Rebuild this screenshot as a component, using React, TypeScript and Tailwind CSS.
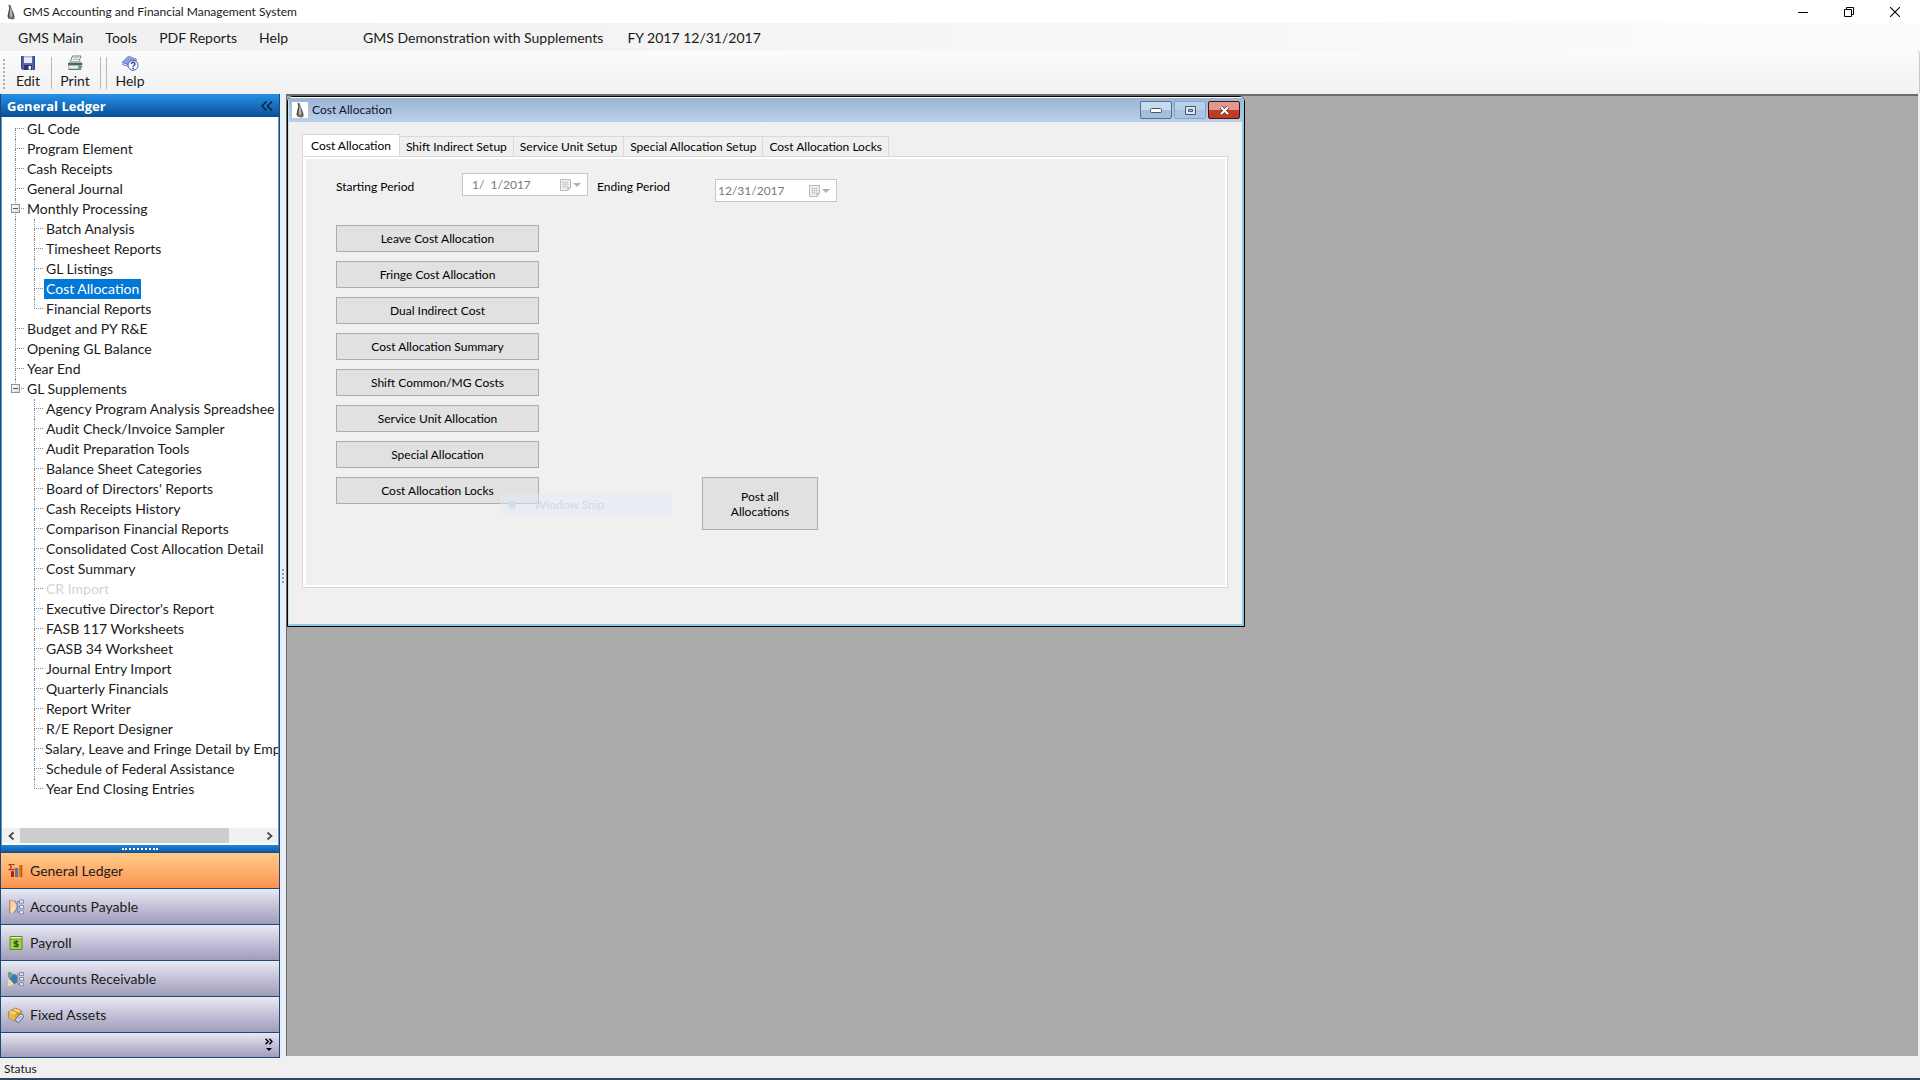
import React, { useState } from 'react';
import clsx from 'clsx';

type TreeNode = {
  label: string;
  disabled?: boolean;
  children?: TreeNode[];
};

const treeNodes: TreeNode[] = [
  { label: 'GL Code' },
  { label: 'Program Element' },
  { label: 'Cash Receipts' },
  { label: 'General Journal' },
  {
    label: 'Monthly Processing',
    children: [
      { label: 'Batch Analysis' },
      { label: 'Timesheet Reports' },
      { label: 'GL Listings' },
      { label: 'Cost Allocation' },
      { label: 'Financial Reports' },
    ],
  },
  { label: 'Budget and PY R&E' },
  { label: 'Opening GL Balance' },
  { label: 'Year End' },
  {
    label: 'GL Supplements',
    children: [
      { label: 'Agency Program Analysis Spreadshee' },
      { label: 'Audit Check/Invoice Sampler' },
      { label: 'Audit Preparation Tools' },
      { label: 'Balance Sheet Categories' },
      { label: "Board of Directors' Reports" },
      { label: 'Cash Receipts History' },
      { label: 'Comparison Financial Reports' },
      { label: 'Consolidated Cost Allocation Detail' },
      { label: 'Cost Summary' },
      { label: 'CR Import', disabled: true },
      { label: "Executive Director's Report" },
      { label: 'FASB 117 Worksheets' },
      { label: 'GASB 34 Worksheet' },
      { label: 'Journal Entry Import' },
      { label: 'Quarterly Financials' },
      { label: 'Report Writer' },
      { label: 'R/E Report Designer' },
      { label: 'Salary, Leave and Fringe Detail by Emp' },
      { label: 'Schedule of Federal Assistance' },
      { label: 'Year End Closing Entries' },
    ],
  },
];

const tabs = [
  'Cost Allocation',
  'Shift Indirect Setup',
  'Service Unit Setup',
  'Special Allocation Setup',
  'Cost Allocation Locks',
];

const allocationActions = [
  'Leave Cost Allocation',
  'Fringe Cost Allocation',
  'Dual Indirect Cost',
  'Cost Allocation Summary',
  'Shift Common/MG Costs',
  'Service Unit Allocation',
  'Special Allocation',
  'Cost Allocation Locks',
];

/* Icons */

const AppIcon = () => (
  <svg width="16" height="16" viewBox="0 0 16 16" aria-hidden="true">
    <path d="M5.5.5 8 1.2l.8 4 2.2 4.300.8 4-1.200.8H5.200L4.600 12l1-4.500.6-3.200z" fill="#96918b" />
    <path d="M5.500.5 7.500 3l-.2 4L6.200 11l.4 3.500-1.400-.2-.6-2.300 1-4.500.7-3.200z" fill="#4d4845" />
    <path d="M8.200 3.500 9.900 8l1.300 5-1.600 1.200.2-3.400z" fill="#4a4542" />
    <path d="M7.700 5.500 8.200 12" stroke="#dcd8d2" />
    <path d="M5 14.500 8 13.400l4.300 1.100-3 1z" fill="#6a655f" />
  </svg>
);

const SaveIcon = () => (
  <svg width="16" height="16" viewBox="0 0 16 16" aria-hidden="true">
    <path d="M1 1h14v14H2.5L1 13.5z" fill="#5668b4" />
    <path d="M1 1h1.5v12.5H1zM13.5 1H15v14h-1.5z" fill="#36458c" />
    <path d="M4 1h8v7H4z" fill="#e9eefb" />
    <path d="M4 1h8v1.5H4z" fill="#a9b6e2" />
    <path d="M4 10h8v5H4z" fill="#2b3468" />
    <path d="M8.5 11H11v3.5H8.5z" fill="#f4f6fd" />
  </svg>
);

const PrinterIcon = () => (
  <svg width="16" height="16" viewBox="0 0 16 16" aria-hidden="true">
    <path d="M5.5 1H14l-2.5 6.5H3z" fill="#fff" stroke="#5f6a6a" strokeWidth=".9" />
    <path d="M6.4 2.8h5.4M5.7 4.6h5.4" stroke="#8a9999" strokeWidth=".8" />
    <path d="m1 8 2.2-2h10.2L15.2 8v5l-1.6 1.8H2.2L1 13.5z" fill="#aab4b4" />
    <path d="M1 8h14.2v2H1z" fill="#55605f" />
    <path d="M2 11h9v3H2z" fill="#e6ecea" />
    <path d="M11.4 10.6h3v2.6h-3z" fill="#38b24a" />
    <path d="M1.5 14.3h12.4" stroke="#4c5757" />
  </svg>
);

const HelpBookIcon = () => (
  <svg width="18" height="16" viewBox="0 0 18 16" aria-hidden="true">
    <path d="M1 7 7.5.8 15.6 4v3L9 12.6 1.4 10z" fill="#6575c4" />
    <path d="M1 7 7.5.8 15.6 4 9 9.8z" fill="#8f9cdb" />
    <path d="m1.2 8.4 7.6 2.9 6.5-5.4" stroke="#e6eaf8" fill="none" />
    <circle cx="12" cy="10.3" r="5" fill="#f7faff" stroke="#4b5fae" />
    <path d="M10.3 9a1.8 1.7 0 1 1 2.6 1.5c-.7.4-.8.7-.8 1.3" stroke="#2d479f" strokeWidth="1.4" fill="none" />
    <circle cx="12.1" cy="13.3" r=".9" fill="#2d479f" />
  </svg>
);

const LedgerIcon = () => (
  <svg width="16" height="16" viewBox="0 0 16 16" aria-hidden="true">
    <path d="M6 2.2v-.7H1.2L3.6 4 1.2 6.6H6v-.9" stroke="#b3341c" strokeWidth="1.1" fill="none" />
    <path d="M3 8.2h3V14H3z" fill="#b01f14" />
    <path d="M7 5h3.2v9H7z" fill="#6c6c9c" />
    <path d="M11.2 2h3v12h-3z" fill="#d9731a" />
    <path d="M13.2 2h1v12h-1z" fill="#b35a10" />
  </svg>
);

const PayableIcon = () => (
  <svg width="16" height="16" viewBox="0 0 16 16" aria-hidden="true">
    <path d="M1.5 1v13.5" stroke="#d7705f" />
    <path d="M2 1.5h2.6c3 1 4.3 3.6 4.3 6.2L5 13.6l-3 .9z" fill="#f5cdb2" stroke="#d88b70" strokeWidth=".7" />
    <path d="M3 8.5 9 7l-3.6 6.5-2.4.8z" fill="#f7dfa6" />
    <path d="m6 1.5 3.6 4-1.4 6L5.6 14" stroke="#7191c6" strokeWidth="1.1" fill="none" />
    <path d="M9 2.5h2.5M9 8h2.5M9 13.2h2.5M9.6 2.5v10.7" stroke="#7a8fb4" fill="none" />
    <path d="M11.5 1h4v3h-4zM11.5 6.4h4v3h-4zM11.5 11.8h4v3h-4z" fill="#edf2fb" stroke="#7a8fb4" />
  </svg>
);

const PayrollIcon = () => (
  <svg width="16" height="16" viewBox="0 0 16 16" aria-hidden="true">
    <path d="M2 1.5h12v13H2z" fill="#a8cf4e" stroke="#5d8c1f" />
    <path d="M2.5 2h11v1.6h-11z" fill="#e4f2c2" />
    <path d="M2 4.2h12" stroke="#5d8c1f" strokeWidth=".8" />
    <path
      d="M10.4 7C9.6 6.2 6 6 6 7.7c0 1.8 4.4.8 4.4 2.5 0 1.7-3.8 1.5-4.7.5M8.2 5.300v7.200"
      stroke="#22610f"
      strokeWidth="1.3"
      fill="none"
    />
  </svg>
);

const ReceivableIcon = () => (
  <svg width="16" height="16" viewBox="0 0 16 16" aria-hidden="true">
    <path d="M0 1h2.5L6 4 2 8.5 0 6z" fill="#6ba48c" />
    <path d="m0 8.5 3.6 1L6 13l-3 2H0z" fill="#efd9a2" />
    <path d="M6.2 2.8 9 4.5v7l-2.800 1.800L1.600 8z" fill="#3f78b4" />
    <path d="M9 3h3M9 8h3M9 13.2h3M9.7 3v10" stroke="#8b9199" fill="none" />
    <path d="M11.5 1.5h4v3h-4zM11.5 6.5h4v3h-4zM11.5 11.7h4v3h-4z" fill="#dfe2ec" stroke="#868c95" />
  </svg>
);

const AssetsIcon = () => (
  <svg width="16" height="16" viewBox="0 0 16 16" aria-hidden="true">
    <path d="M.5 4.8 7.5 1l5.800 2.600v6L6.200 14 .5 10.600z" fill="#e2a63b" stroke="#9a6a1c" strokeWidth=".7" />
    <path d="M.9 4.9 7.5 1.400l5.400 2.300-6.600 3.700z" fill="#f8d788" />
    <path d="M6.3 7.4v6.3L.9 10.5V5z" fill="#eeb850" />
    <path d="m4 3.3 5.6 2.4v2" stroke="#b98428" fill="none" />
    <rect x="9.3" y="6.5" width="4.5" height="9" rx="2.2" transform="rotate(42 11.5 11)" fill="#e3e8f4" stroke="#5b6c96" />
    <path d="m9.8 12.800 3.400-3.600" stroke="#5b6c96" />
  </svg>
);

const CalendarIcon = () => (
  <svg width="22" height="14" viewBox="0 0 22 14" aria-hidden="true">
    <path d="M1.5 1.5h10v8l-2.500 3H1.500z" fill="#f2f2f2" stroke="#b9b9b9" />
    <path d="M3 4.5h7M3 6.5h7M3 8.5h6M4.500 3v8M6.500 3v8M8.500 3v8" stroke="#d3d3d3" />
    <path d="M9 12.5v-3h2.500" stroke="#b9b9b9" fill="none" />
    <path d="M14 5h8l-4 4z" fill="#b0b0b0" />
  </svg>
);

const navItems = [
  { label: 'General Ledger', icon: <LedgerIcon /> },
  { label: 'Accounts Payable', icon: <PayableIcon /> },
  { label: 'Payroll', icon: <PayrollIcon /> },
  { label: 'Accounts Receivable', icon: <ReceivableIcon /> },
  { label: 'Fixed Assets', icon: <AssetsIcon /> },
];

/* Top bars */

const TitleBar = () => (
  <header className="flex h-[23px] shrink-0 items-center bg-white">
    <div className="flex items-center gap-1 pl-[3px]">
      <AppIcon />
      <h1 className="text-[12px] leading-4 text-[#1a1a1a]">
        GMS Accounting and Financial Management System
      </h1>
    </div>
    <div className="mr-0.5 ml-auto flex">
      <button aria-label="Minimize" className="flex h-5 w-[46px] items-center justify-center">
        <svg width="10" height="10" viewBox="0 0 10 10">
          <path d="M0 5.5h10" stroke="#000" />
        </svg>
      </button>
      <button aria-label="Restore" className="flex h-5 w-[46px] items-center justify-center">
        <svg width="10" height="10" viewBox="0 0 10 10" fill="none" stroke="#000">
          <path d="M.5 2.5h7v7h-7zM2.5 2.5v-2h7v7h-2" />
        </svg>
      </button>
      <button aria-label="Close" className="flex h-5 w-[46px] items-center justify-center">
        <svg width="10" height="10" viewBox="0 0 10 10">
          <path d="m0 0 10 10M10 0 0 10" stroke="#000" strokeWidth="1.1" />
        </svg>
      </button>
    </div>
  </header>
);

const MenuBar = () => (
  <nav className="flex h-7 shrink-0 items-center bg-linear-to-r from-[#f0f0f0] to-[#fcfcfc] pl-[7px] text-[14px] text-[#1a1a1a]">
    {['GMS Main', 'Tools', 'PDF Reports', 'Help'].map((item) => (
      <button key={item} className="px-[11px]">
        {item}
      </button>
    ))}
    <span className="ml-16">GMS Demonstration with Supplements</span>
    <span className="ml-6">FY 2017 12/31/2017</span>
  </nav>
);

const ToolButton = ({ label, icon }: { label: string; icon: React.ReactNode }) => (
  <button className="flex w-[46px] flex-col items-center text-[14px] leading-5 text-[#1a1a1a]">
    {icon}
    {label}
  </button>
);

const ToolBar = () => (
  <div className="flex h-[43px] shrink-0 rounded-r border-r border-[#c8c8c8] bg-linear-to-b from-[#fbfbfb] to-[#f1f1f1] pt-1 pl-[3px]">
    <div className="mt-1 h-[30px] border-l-2 border-dotted border-[#b0b0b0]" />
    <ToolButton label="Edit" icon={<SaveIcon />} />
    <div className="mt-0.5 h-8 w-px bg-[#b8b8b8]" />
    <ToolButton label="Print" icon={<PrinterIcon />} />
    <div className="mt-0.5 mr-[5px] ml-0.5 h-8 w-px bg-[#b8b8b8]" />
    <div className="mt-0.5 h-8 w-px bg-[#b8b8b8]" />
    <ToolButton label="Help" icon={<HelpBookIcon />} />
  </div>
);

/* Sidebar */

const Branch = ({ last, first, box }: { last?: boolean; first?: boolean; box?: boolean }) => (
  <span className="relative flex h-5 w-[9px] shrink-0 flex-col">
    <span
      className={clsx(
        'h-[10px] border-b border-dotted border-[#7d8b98]',
        !first && 'border-l'
      )}
    />
    {!last && <span className="h-[10px] border-l border-dotted border-[#7d8b98]" />}
    {box && (
      <span className="absolute top-[5px] -left-1 flex size-[9px] items-center justify-center border border-[#919191] bg-linear-to-br from-white to-[#dcdcdc]">
        <span className="h-px w-[5px] bg-[#3c55a5]" />
      </span>
    )}
  </span>
);

const TreeRow = ({
  node,
  selected,
  onSelect,
}: {
  node: TreeNode;
  selected: boolean;
  onSelect: (label: string) => void;
}) => (
  <button
    disabled={node.disabled}
    onClick={() => onSelect(node.label)}
    className={clsx(
      'h-5 px-0.5 text-[14px] leading-5 whitespace-nowrap',
      selected ? 'bg-[#0078d7] text-white' : node.disabled ? 'text-[#d4d4d4]' : 'text-[#1a1a1a]'
    )}
  >
    {node.label}
  </button>
);

const LedgerTree = () => {
  const [selected, setSelected] = useState('Cost Allocation');

  return (
    <ul className="min-h-0 flex-1 overflow-hidden pt-0.5">
      {treeNodes.map((node, i) => {
        const last = i === treeNodes.length - 1;
        return (
          <li key={node.label}>
            <div className="flex pl-[13px]">
              <Branch first={i === 0} last={last} box={!!node.children} />
              <span className="w-px" />
              <TreeRow node={node} selected={selected === node.label} onSelect={setSelected} />
            </div>
            {node.children && (
              <ul
                className={clsx(
                  'ml-[13px] border-l border-dotted pl-[18px]',
                  last ? 'border-transparent' : 'border-[#7d8b98]'
                )}
              >
                {node.children.map((child, j) => (
                  <li key={child.label} className="flex">
                    <Branch last={j === node.children!.length - 1} />
                    <span className="w-px" />
                    <TreeRow
                      node={child}
                      selected={selected === child.label}
                      onSelect={setSelected}
                    />
                  </li>
                ))}
              </ul>
            )}
          </li>
        );
      })}
    </ul>
  );
};

const Sidebar = () => (
  <aside className="flex w-[280px] shrink-0 flex-col border-x border-[#1d4a75]">
    <div className="flex h-[23px] shrink-0 items-center justify-between bg-linear-to-b from-[#2492ea] to-[#0a4f96] px-1.5">
      <h2 className="font-[Open_Sans,sans-serif] text-[13px] leading-5 font-bold text-white">
        General Ledger
      </h2>
      <button aria-label="Collapse panel">
        <svg width="12" height="10" viewBox="0 0 12 10" fill="none" stroke="#0c1c30" strokeWidth="1.4">
          <path d="M5.5.5 1 5l4.500 4.500M11 .5 6.500 5 11 9.500" />
        </svg>
      </button>
    </div>

    <div className="flex min-h-0 flex-1 flex-col border-x border-[#5b9bd0] bg-white">
      <LedgerTree />
      <div className="mb-0.5 flex h-[15px] shrink-0 items-center bg-[#f1f1f1]">
        <button aria-label="Scroll left" className="flex w-[18px] justify-center">
          <svg width="7" height="8" viewBox="0 0 7 8" fill="none" stroke="#404040" strokeWidth="1.7">
            <path d="M5.5.5 1.500 4l4 3.500" />
          </svg>
        </button>
        <div className="flex h-full flex-1">
          <div className="h-full w-[87%] bg-[#cdcdcd]" />
        </div>
        <button aria-label="Scroll right" className="flex w-[18px] justify-center">
          <svg width="7" height="8" viewBox="0 0 7 8" fill="none" stroke="#404040" strokeWidth="1.7">
            <path d="m1.5.5 4 3.500-4 3.500" />
          </svg>
        </button>
      </div>
    </div>

    <div className="flex h-2 shrink-0 items-center justify-center border-b border-[#1d4a75] bg-linear-to-b from-[#2084d8] to-[#0c5cab]">
      <div className="w-9 border-t-2 border-dotted border-white" />
    </div>

    <nav className="shrink-0">
      {navItems.map((item, i) => (
        <button
          key={item.label}
          className={clsx(
            'flex h-9 w-full items-center gap-1.5 border-b border-[#1d4a75] bg-linear-to-b pl-[7px] text-[14px] text-[#1a1a1a]',
            i === 0 ? 'from-[#ffcb8b] to-[#fc9350]' : 'from-[#e9e9f3] to-[#a09dbb]'
          )}
        >
          {item.icon}
          {item.label}
        </button>
      ))}
      <div className="flex h-[25px] justify-end border-b border-[#1d4a75] bg-linear-to-b from-[#e9e9f3] to-[#a09dbb] pt-1 pr-1.5">
        <button aria-label="Configure buttons" className="h-4">
          <svg width="8" height="14" viewBox="0 0 8 14" fill="none" stroke="#000" strokeWidth="1.5">
            <path d="m.5.8 2.700 2.700L.5 6.200M4.300.8 7 3.500 4.300 6.200" />
            <path d="M1 10h6l-3 3z" fill="#000" stroke="none" />
          </svg>
        </button>
      </div>
    </nav>
  </aside>
);

/* MDI child window */

const DateField = ({
  id,
  value,
  className,
  inputClass,
}: {
  id: string;
  value: string;
  className: string;
  inputClass: string;
}) => (
  <div className={clsx('flex h-[23px] items-center border border-[#c6c6c6] bg-white', className)}>
    <input
      id={id}
      disabled
      defaultValue={value}
      className={clsx('min-w-0 flex-1 text-[12px] leading-4 whitespace-pre text-[#7a7a7a]', inputClass)}
    />
    <CalendarIcon />
  </div>
);

const WindowTitle = () => (
  <div className="flex h-6 shrink-0 items-center bg-linear-to-b from-[#9ab4d2] to-[#bad1ea] pl-[3px]">
    <span className="bg-white">
      <AppIcon />
    </span>
    <h2 className="ml-1 text-[#141428]">Cost Allocation</h2>
    <div className="ml-auto flex gap-0.5 pr-0.5">
      <button
        aria-label="Minimize window"
        className="flex h-[18px] w-8 items-center justify-center rounded-xs border border-[#53708f] bg-linear-to-b from-[#c9dcef] from-50% to-[#a3bfdc] to-50%"
      >
        <svg width="12" height="6" viewBox="0 0 12 6">
          <rect x=".5" y="1.5" width="11" height="4" rx="1" fill="#fff" stroke="#44566c" />
        </svg>
      </button>
      <button
        aria-label="Maximize window"
        className="flex h-[18px] w-8 items-center justify-center rounded-xs border border-[#87a5c6] bg-linear-to-b from-[#b9d0e9] from-50% to-[#a9c5e2] to-50%"
      >
        <svg width="11" height="9" viewBox="0 0 11 9">
          <path d="M.5.5h10v8H.5z" fill="#dfe6ee" stroke="#44566c" />
          <path d="M3.5 3.500h4v2h-4z" fill="#a9c5e2" stroke="#44566c" />
        </svg>
      </button>
      <button
        aria-label="Close window"
        className="flex h-[18px] w-8 items-center justify-center rounded-xs border border-[#4a1210] bg-linear-to-b from-[#e0998c] from-50% to-[#bd3d24] to-50%"
      >
        <svg width="11" height="9" viewBox="0 0 11 9">
          <path d="m2 1 7 7M9 1 2 8" stroke="#5c2a2a" strokeWidth="3.6" />
          <path d="m2 1 7 7M9 1 2 8" stroke="#fff" strokeWidth="2.2" />
        </svg>
      </button>
    </div>
  </div>
);

const CostAllocationWindow = () => {
  const [activeTab, setActiveTab] = useState(tabs[0]);

  return (
    <section className="flex h-[531px] w-[958px] flex-col rounded-t-md border border-black bg-[#f0f0f0] text-[12px] text-black">
      <div className="flex flex-1 flex-col rounded-t border-t border-r-2 border-b-2 border-l border-t-white border-r-[#8fcbe8] border-b-[#8fcbe8] border-l-[#c3e0ee]">
        <WindowTitle />

        <div className="flex flex-1 flex-col pt-3 pr-[14px] pb-9 pl-[13px]">
          <div role="tablist" className="flex items-end">
            {tabs.map((tab) => (
              <button
                key={tab}
                role="tab"
                aria-selected={tab === activeTab}
                onClick={() => setActiveTab(tab)}
                className={clsx(
                  'border-t border-r border-[#d9d9d9]',
                  tab === activeTab
                    ? 'h-[22px] border-l bg-white px-2'
                    : 'h-5 bg-[#f0f0f0] px-1.5'
                )}
              >
                {tab}
              </button>
            ))}
          </div>

          <div className="flex-1 border border-[#d9d9d9] bg-white pt-0.5 pr-0.5 pb-0.5 pl-[3px]">
            <div className="h-full bg-[#f0f0f0] pt-[14px] pl-[30px]">
              <div className="flex">
                <label htmlFor="starting-period" className="w-[126px] pt-1 leading-5">
                  Starting Period
                </label>
                <DateField
                  id="starting-period"
                  value=" 1/  1/2017"
                  className="w-[126px] pr-1.5"
                  inputClass="pl-1.5"
                />
                <label htmlFor="ending-period" className="ml-[9px] w-[118px] pt-1 leading-5">
                  Ending Period
                </label>
                <DateField
                  id="ending-period"
                  value="12/31/2017"
                  className="mt-1.5 w-[122px] pr-1.5"
                  inputClass="pl-0.5"
                />
              </div>

              <div className="mt-[23px] flex items-end">
                <div className="relative flex w-[203px] flex-col gap-[9px]">
                  {allocationActions.map((action) => (
                    <button
                      key={action}
                      className="h-[27px] border border-[#adadad] bg-[#e1e1e1] leading-4"
                    >
                      {action}
                    </button>
                  ))}
                  {/* menu item fading out */}
                  <div className="pointer-events-none absolute -bottom-3 left-[164px] flex h-[22px] w-[172px] items-center gap-[18px] bg-[#dfecf7]/50 pl-2 text-[#d3dae0]">
                    <span className="size-2 rounded-full bg-[#d3dee8]" />
                    Window Snip
                  </div>
                </div>
                <button className="-mb-[26px] ml-[163px] h-[53px] w-[116px] border border-[#adadad] bg-[#e1e1e1] px-5 leading-[15px]">
                  Post all Allocations
                </button>
              </div>
            </div>
          </div>
        </div>
      </div>
    </section>
  );
};

export default function App() {
  return (
    <div className="flex h-screen w-full flex-col overflow-hidden bg-[#f0f0f0] font-[Lato,sans-serif]">
      <TitleBar />
      <MenuBar />
      <ToolBar />

      <div className="flex min-h-0 flex-1">
        <Sidebar />
        <div className="flex w-[6px] shrink-0 items-center justify-center bg-[#e9eef6]">
          <div className="h-[14px] border-l-2 border-dotted border-[#9a9a9a]" />
        </div>
        <main className="min-w-0 flex-1 pr-0.5 pb-0.5">
          <div className="h-full border-t-2 border-l border-[#6b6b6b] bg-[#ababab]">
            <CostAllocationWindow />
          </div>
        </main>
      </div>

      <footer className="flex h-[22px] shrink-0 items-center border-b-2 border-[#33475c] bg-[#f0f0f0] pt-0.5 pl-1 text-[12px] text-[#1a1a1a]">
        Status
      </footer>
    </div>
  );
}
